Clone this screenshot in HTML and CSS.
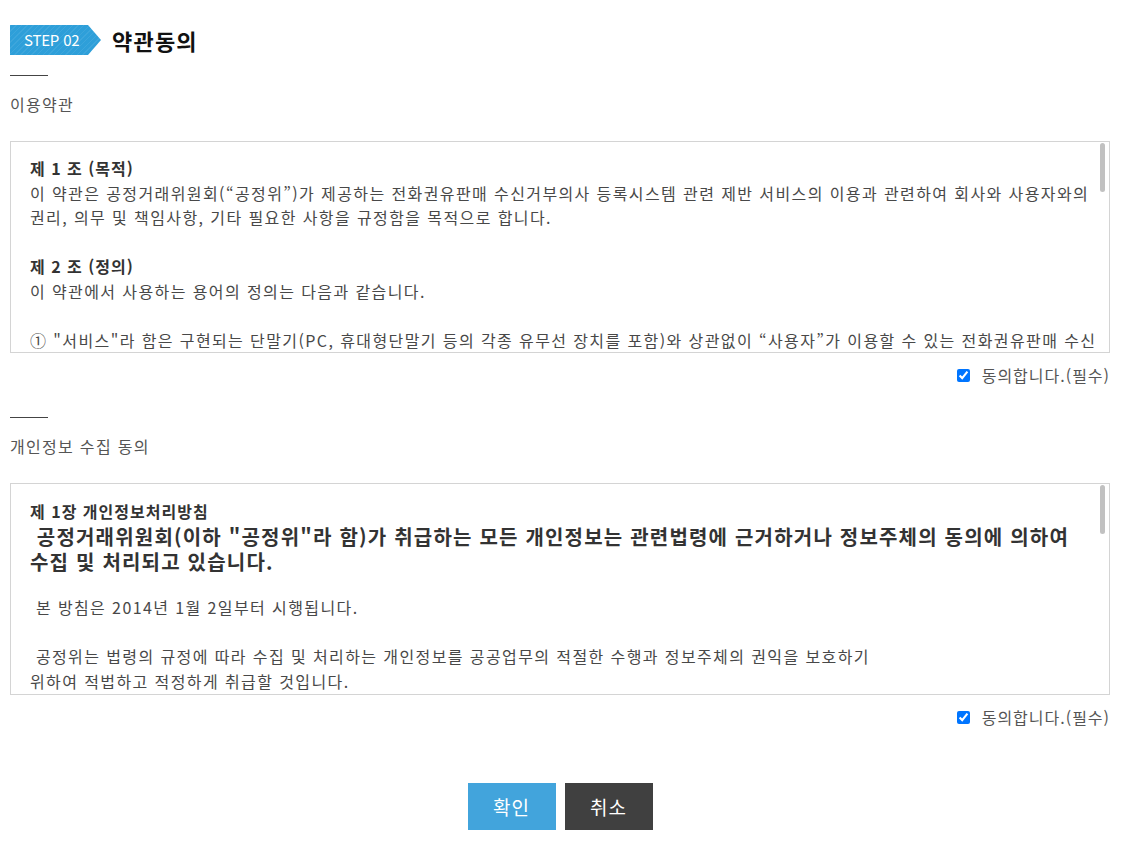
FILE: index.html
```html
<!DOCTYPE html>
<html lang="ko">
<head>
    <meta charset="UTF-8">
    <meta name="viewport" content="width=device-width, initial-scale=1.0">
    <title>약관동의</title>
    <link rel="stylesheet" href="styles.css">
</head>
<body>
    <div class="wrap">
        <div class="step-title">
            <span class="step-badge">STEP 02</span>
            <h2>약관동의</h2>
        </div>

        <div class="section">
            <h3 class="section-title">이용약관</h3>
            <div class="terms-wrap">
                <div class="terms-box">
                    <p><strong>제 1 조 (목적)</strong><br>
                    이 약관은 공정거래위원회(“공정위”)가 제공하는 전화권유판매 수신거부의사 등록시스템 관련 제반 서비스의 이용과 관련하여 회사와 사용자와의 권리, 의무 및 책임사항, 기타 필요한 사항을 규정함을 목적으로 합니다.</p>
                    <p><strong>제 2 조 (정의)</strong><br>
                    이 약관에서 사용하는 용어의 정의는 다음과 같습니다.</p>
                    <p>① "서비스"라 함은 구현되는 단말기(PC, 휴대형단말기 등의 각종 유무선 장치를 포함)와 상관없이 “사용자”가 이용할 수 있는 전화권유판매 수신거부의사 등록시스템 관련 제반 서비스를 의미합니다.</p>
                    <p>② "사용자"라 함은 이 약관에 따라 공정위가 제공하는 서비스를 받는 자를 말합니다.</p>
                    <p><strong>제 3 조 (약관의 게시와 개정)</strong><br>
                    공정위는 이 약관의 내용을 사용자가 쉽게 알 수 있도록 서비스 초기 화면에 게시합니다.</p>
                </div>
            </div>
            <label class="agree"><input type="checkbox" checked> 동의합니다.(필수)</label>
        </div>

        <div class="section">
            <h3 class="section-title">개인정보 수집 동의</h3>
            <div class="terms-wrap">
                <div class="terms-box">
                    <p class="chapter"><strong>제 1장 개인정보처리방침</strong></p>
                    <h4 class="lead">&nbsp;공정거래위원회(이하 "공정위"라 함)가 취급하는 모든 개인정보는 관련법령에 근거하거나 정보주체의 동의에 의하여<br>수집 및 처리되고 있습니다.</h4>
                    <p>&nbsp;본 방침은 2014년 1월 2일부터 시행됩니다.</p>
                    <p>&nbsp;공정위는 법령의 규정에 따라 수집 및 처리하는 개인정보를 공공업무의 적절한 수행과 정보주체의 권익을 보호하기<br>
                    위하여 적법하고 적정하게 취급할 것입니다.</p>
                    <p>&nbsp;공정위는 개인정보 보호법 제30조에 따라 정보주체의 개인정보를 보호하고 이와 관련한 고충을 신속하고 원활하게 처리할 수 있도록 다음과 같이 개인정보 처리방침을 수립·공개합니다.</p>
                </div>
            </div>
            <label class="agree"><input type="checkbox" checked> 동의합니다.(필수)</label>
        </div>

        <div class="btn-area">
            <button class="btn btn-ok">확인</button>
            <button class="btn btn-cancel">취소</button>
        </div>
    </div>
</body>
</html>
```

FILE: styles.css
```css
*{
    margin: 0;
    padding: 0;
    box-sizing: border-box;
}
body{
    font-family: "Noto Sans CJK KR", "Noto Sans", sans-serif;
    color: #444;
    background-color: #fff;
}
.wrap{
    width: 1100px;
    margin-left: 10px;
    padding-top: 25px;
}
.step-title{
    display: flex;
    align-items: center;
    gap: 11px;
    height: 30px;
}
.step-badge{
    display: inline-block;
    width: 91px;
    height: 30px;
    line-height: 30px;
    padding-left: 14px;
    font-size: 15px;
    color: #fff;
    letter-spacing: -0.2px;
    background-color: #2e9fd9;
    background-image: repeating-linear-gradient(135deg, rgba(255,255,255,0.07) 0 1px, transparent 1px 4px);
    clip-path: polygon(0 0, 78px 0, 91px 50%, 78px 100%, 0 100%);
}
.step-title h2{
    font-size: 22px;
    font-weight: bold;
    color: #111;
    letter-spacing: 1.2px;
}
.section{
    margin-top: 20px;
}
.section + .section{
    margin-top: 30px;
}
.section-title{
    font-size: 16px;
    font-weight: normal;
    color: #555;
    border-top: 1px solid #444;
    width: 38px;
    white-space: nowrap;
    padding-top: 16px;
    line-height: 24px;
    margin-bottom: 25px;
    letter-spacing: 1.3px;
}
.terms-wrap{
    position: relative;
}
/* 스크롤바 표시 */
.terms-wrap::after{
    content: "";
    position: absolute;
    top: 2px;
    right: 5px;
    width: 5px;
    height: 49px;
    border-radius: 3px;
    background-color: #c1c1c1;
}
.terms-box{
    height: 212px;
    border: 1px solid #d4d4d4;
    padding: 14px 12px 0 19px;
    overflow: hidden;
    font-size: 16px;
    line-height: 24.5px;
    color: #484848;
    letter-spacing: 1.4px;
}
.terms-box p{
    margin-bottom: 24.5px;
}
.terms-box strong{
    color: #333;
    letter-spacing: 1px;
}
.terms-box p.chapter{
    margin-bottom: 0;
    line-height: 26px;
}
.terms-box .lead{
    font-size: 20px;
    font-weight: bold;
    color: #333;
    line-height: 25px;
    margin-bottom: 21px;
    letter-spacing: 1.2px;
}
.agree{
    display: flex;
    justify-content: flex-end;
    align-items: center;
    gap: 12px;
    margin-top: 10px;
    font-size: 16px;
    color: #555;
    letter-spacing: 1px;
}
.agree input{
    width: 13px;
    height: 13px;
}
.btn-area{
    display: flex;
    justify-content: center;
    gap: 9px;
    margin-top: 54px;
}
.btn{
    width: 88px;
    height: 47px;
    border: none;
    font-family: inherit;
    font-size: 19px;
    color: #fff;
    letter-spacing: 1px;
    cursor: pointer;
}
.btn-ok{
    background-color: #42a4dc;
}
.btn-cancel{
    background-color: #404040;
}
```
